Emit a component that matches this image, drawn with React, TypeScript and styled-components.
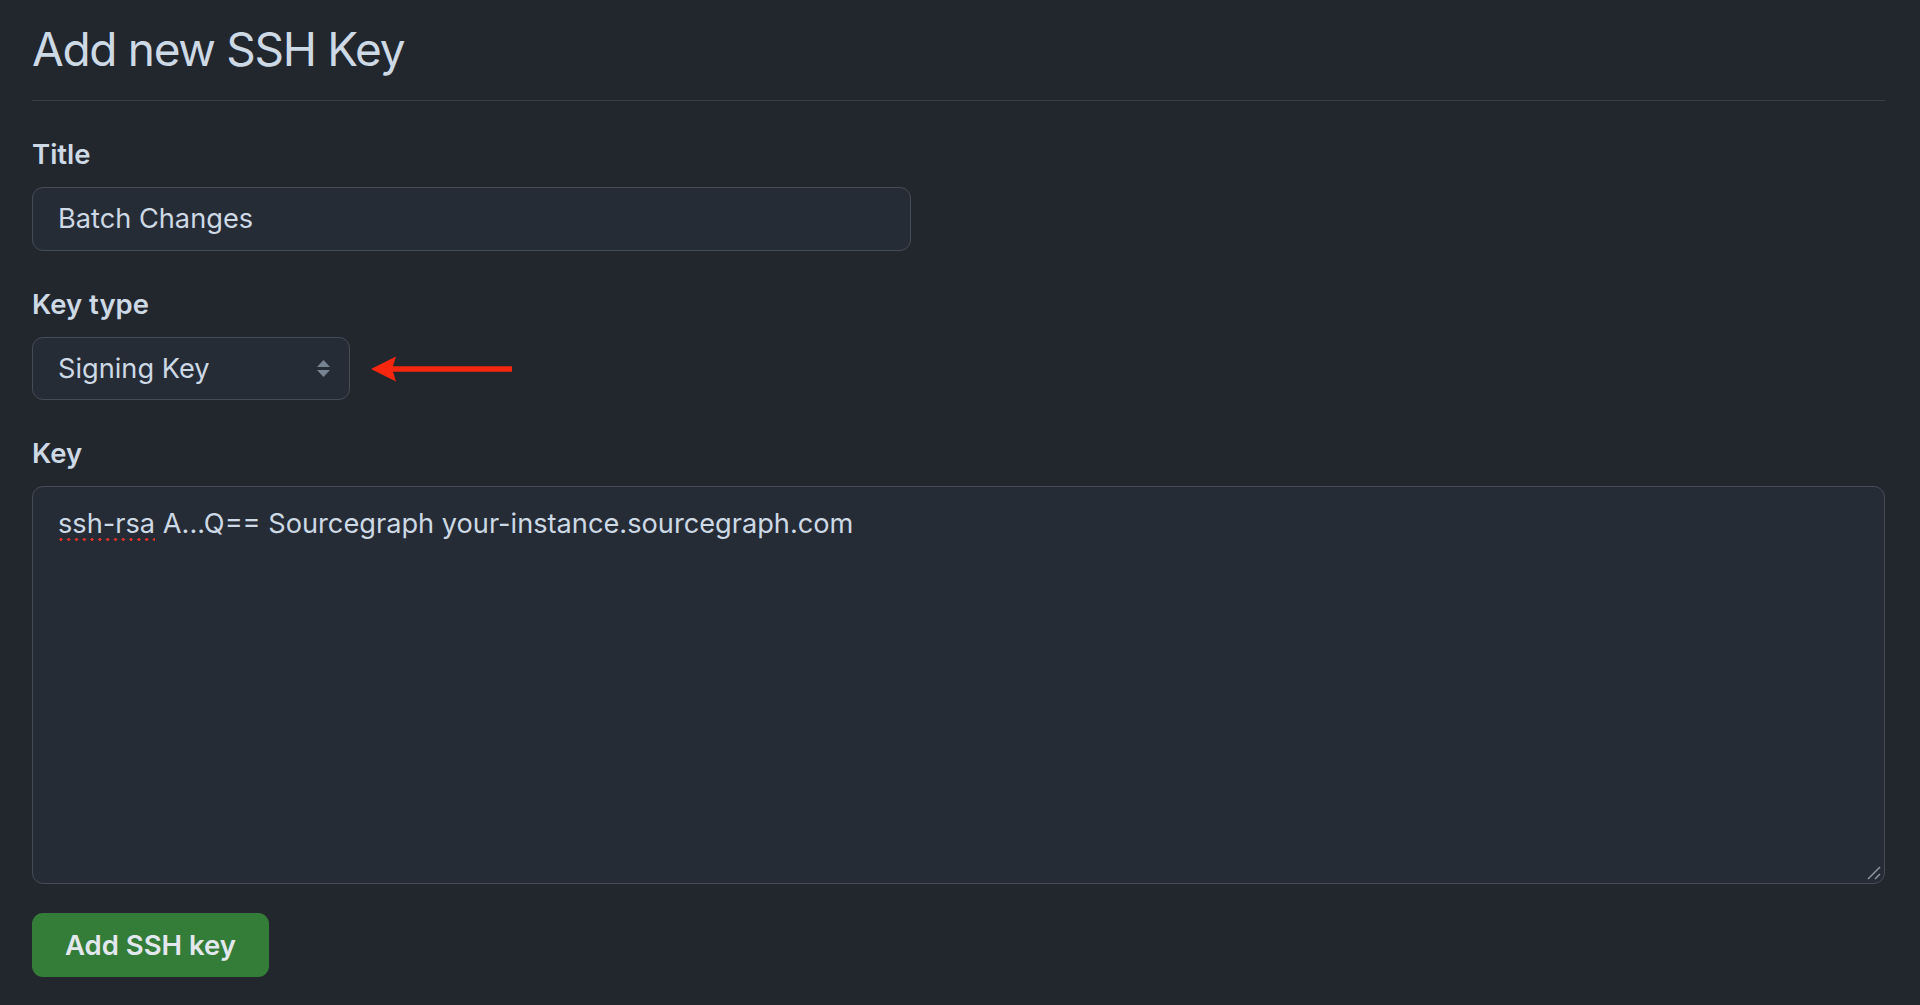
import React from "react";
import styled, { createGlobalStyle } from "styled-components";

const GlobalStyle = createGlobalStyle`
  html, body {
    margin: 0;
    padding: 0;
    background: #22272e;
  }
  body {
    font-family: Inter, "Noto Sans", "Liberation Sans", sans-serif;
    color: #cdd9e5;
  }
  * { box-sizing: border-box; }
`;

const Page = styled.main`
  min-height: 1005px;
  padding: 20px 35px 0 32px;
  display: flex;
  flex-direction: column;
`;

const Heading = styled.h2`
  margin: 0;
  font-size: 46px;
  font-weight: 400;
  line-height: 58px;
  letter-spacing: -1.3px;
  color: #cdd9e5;
  padding-bottom: 22px;
  border-bottom: 1px solid #373e47;
`;

const Form = styled.form`
  display: flex;
  flex-direction: column;
`;

const Group = styled.div`
  display: flex;
  flex-direction: column;
  margin-top: 35px;
`;

const Label = styled.label`
  font-size: 27.5px;
  font-weight: 600;
  line-height: 36px;
  color: #cdd9e5;
  margin-bottom: 15px;
`;

const Field = styled.div<{ $width: number; $height: number }>`
  width: ${(p) => p.$width}px;
  height: ${(p) => p.$height}px;
  background: #262c36;
  border: 1px solid #444c56;
  border-radius: 11px;
  display: flex;
  align-items: center;
  padding: 0 25px;
  font-size: 27.2px;
  line-height: 34px;
  color: #cdd9e5;
`;

const SelectRow = styled.div`
  display: flex;
  align-items: center;
  gap: 21px;
`;

const SelectBox = styled(Field)`
  justify-content: space-between;
  padding-right: 18px;
`;

const KeyBox = styled.div`
  position: relative;
  height: 398px;
  background: #262c36;
  border: 1px solid #444c56;
  border-radius: 11px;
  padding: 16px 25px;
  font-size: 27.2px;
  line-height: 42px;
  color: #cdd9e5;
`;

const Misspelled = styled.span`
  background-image: radial-gradient(circle, #e0302a 1.4px, transparent 1.7px);
  background-size: 7.8px 5px;
  background-repeat: repeat-x;
  background-position: -1px 100%;
  padding-bottom: 2px;
`;

const Grip = styled.svg`
  position: absolute;
  right: 2px;
  bottom: 2px;
`;

const SubmitButton = styled.button`
  margin-top: 29px;
  align-self: flex-start;
  width: 237px;
  height: 64px;
  border: none;
  border-radius: 11px;
  background: #347d39;
  color: #e3e8ee;
  font-family: Inter, "Noto Sans", "Liberation Sans", sans-serif;
  font-size: 27.5px;
  font-weight: 600;
  cursor: pointer;
`;

const SelectArrows = () => (
  <svg width="15" height="20" viewBox="0 0 15 20">
    <polygon points="7.5,1 14,8 1,8" fill="#768390" />
    <polygon points="1,11 14,11 7.5,18" fill="#768390" />
  </svg>
);

const RedArrow = () => (
  <svg width="141" height="26" viewBox="0 0 141 26">
    <polygon points="0,13 25,0.5 22,10.3 141,10.3 141,15.7 22,15.7 25,25.5" fill="#f7260f" />
  </svg>
);

export default function App() {
  return (
    <>
      <GlobalStyle />
      <Page>
        <Heading>Add new SSH Key</Heading>
        <Form onSubmit={(e) => e.preventDefault()}>
          <Group>
            <Label>Title</Label>
            <Field $width={879} $height={64}>Batch Changes</Field>
          </Group>
          <Group>
            <Label>Key type</Label>
            <SelectRow>
              <SelectBox $width={318} $height={63}>
                <span>Signing Key</span>
                <SelectArrows />
              </SelectBox>
              <RedArrow />
            </SelectRow>
          </Group>
          <Group>
            <Label>Key</Label>
            <KeyBox role="textbox">
              <Misspelled>ssh-rsa</Misspelled> A...Q== Sourcegraph your-instance.sourcegraph.com
              <Grip width="16" height="16" viewBox="0 0 16 16">
                <line x1="2" y1="14" x2="14" y2="2" stroke="#9198a1" strokeWidth="1.4" />
                <line x1="9" y1="14" x2="14" y2="9" stroke="#9198a1" strokeWidth="1.4" />
              </Grip>
            </KeyBox>
          </Group>
          <SubmitButton type="submit">Add SSH key</SubmitButton>
        </Form>
      </Page>
    </>
  );
}
